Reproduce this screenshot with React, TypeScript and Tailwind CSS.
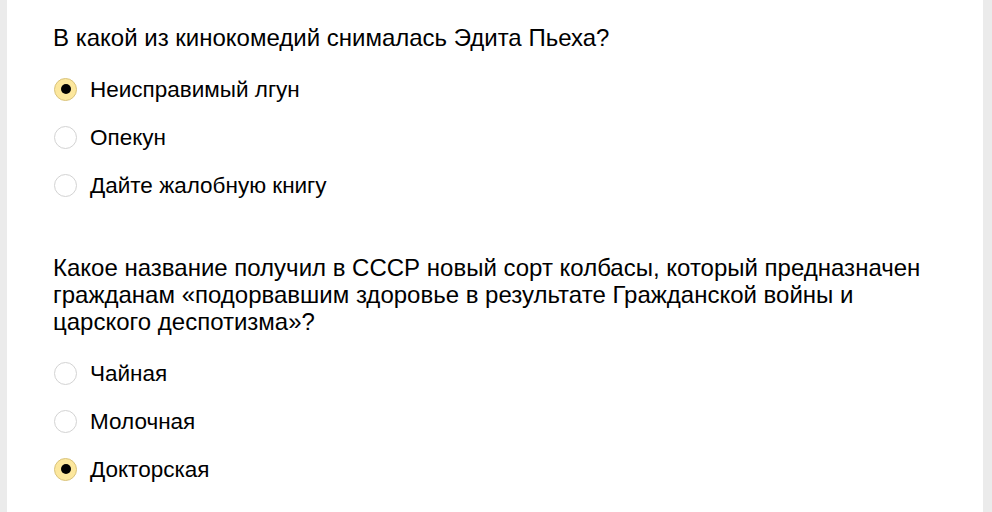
import React from "react";

type Q = { q: string[]; options: string[]; selected: number };

const data: Q[] = [
  {
    q: ["В какой из кинокомедий снималась Эдита Пьеха?"],
    options: ["Неисправимый лгун", "Опекун", "Дайте жалобную книгу"],
    selected: 0,
  },
  {
    q: [
      "Какое название получил в СССР новый сорт колбасы, который предназначен",
      "гражданам «подорвавшим здоровье в результате Гражданской войны и",
      "царского деспотизма»?",
    ],
    options: ["Чайная", "Молочная", "Докторская"],
    selected: 2,
  },
];

function Radio({ on }: { on: boolean }) {
  return on ? (
    <span className="flex h-[23px] w-[23px] shrink-0 items-center justify-center rounded-full border border-[#d9c37c] bg-[#fce79d]">
      <span className="h-[10px] w-[10px] rounded-full bg-black" />
    </span>
  ) : (
    <span className="h-[23px] w-[23px] shrink-0 rounded-full border border-[#d3d3d3] bg-white" />
  );
}

export default function App() {
  return (
    <div className="h-[512px] w-[992px] overflow-hidden bg-[#ebebeb] pl-[7px] pr-[9px]">
      <div
        className="h-full bg-white pl-[46px] pt-[24px] text-black"
        style={{ fontFamily: '"Liberation Sans", Arial, sans-serif' }}
      >
        {data.map((item, i) => (
          <div key={i} className={i > 0 ? "mt-[45px]" : ""}>
            <div className="text-[24px] leading-[27px]">
              {item.q.map((l, k) => (
                <div key={k}>{l}</div>
              ))}
            </div>
            <div className="mt-[14px]">
              {item.options.map((o, k) => (
                <div key={k} className="flex h-[48px] items-center gap-[13px] pl-[1px]">
                  <Radio on={k === item.selected} />
                  <span className="text-[22.5px] leading-[27px]">{o}</span>
                </div>
              ))}
            </div>
          </div>
        ))}
      </div>
    </div>
  );
}
